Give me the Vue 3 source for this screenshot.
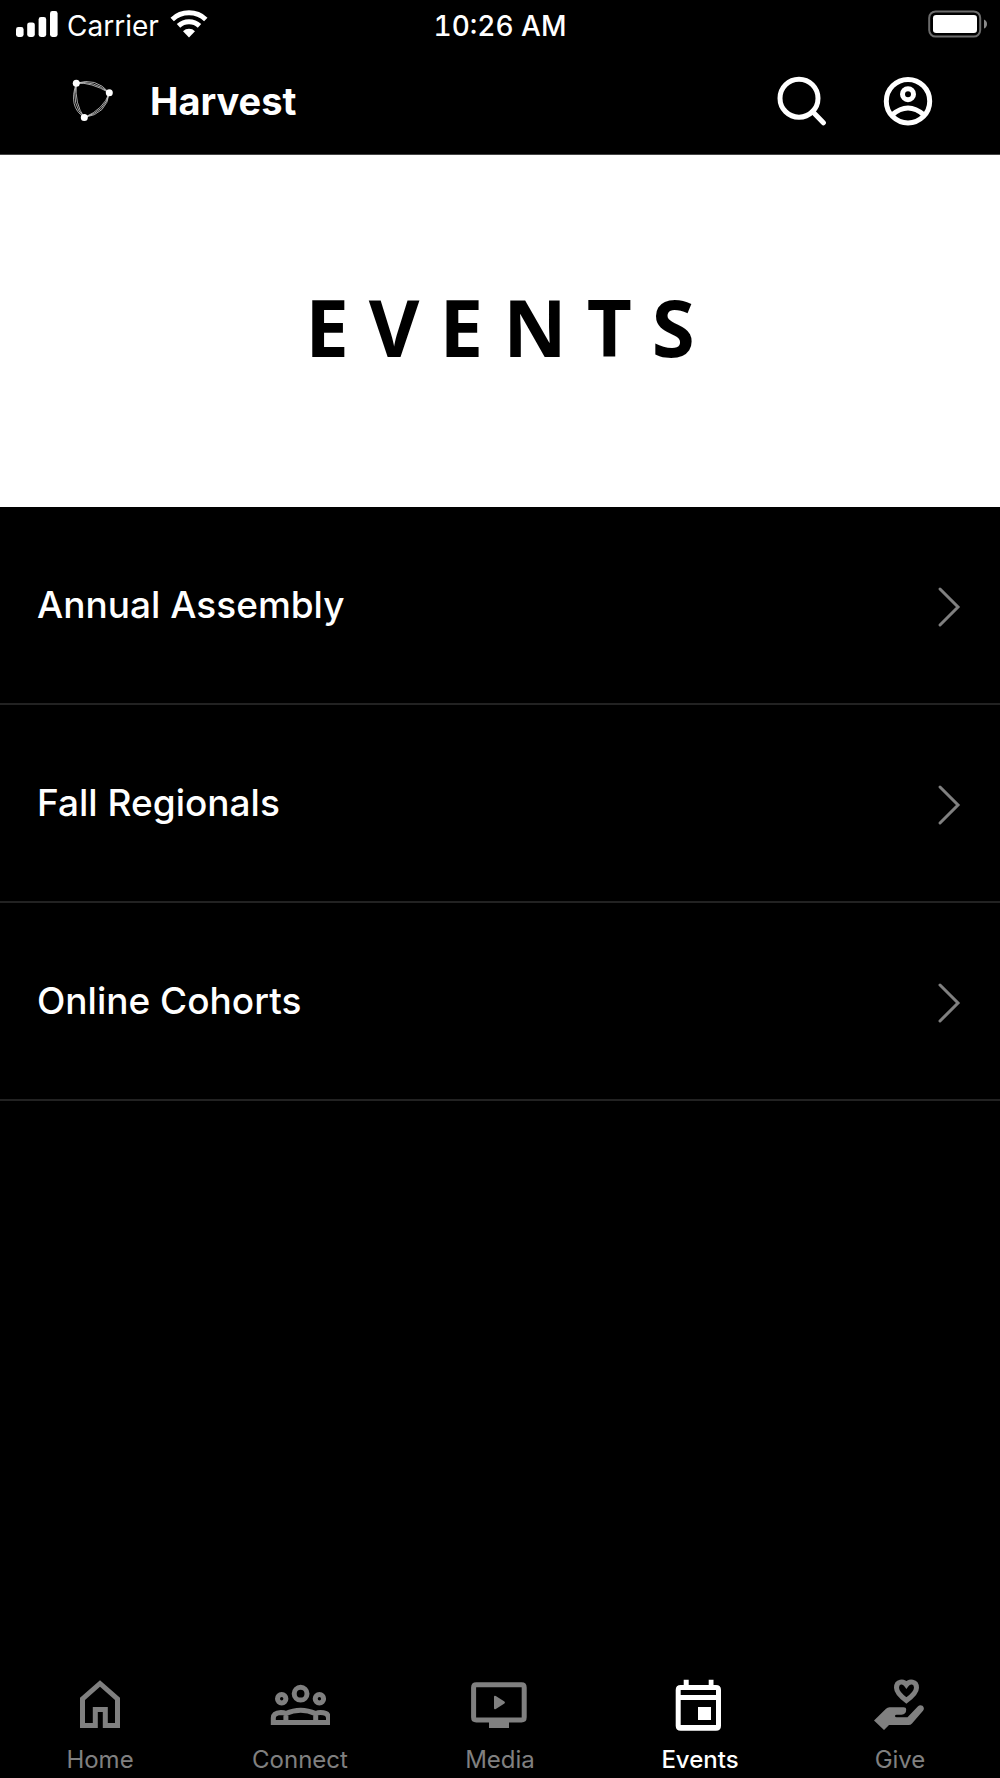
<template>
  <div class="app">
    <div class="status-bar">
      <div class="status-left">
        <svg class="signal" viewBox="0 0 42 28" aria-hidden="true">
          <rect x="0" y="17" width="7.6" height="10" rx="2.4" />
          <rect x="11.2" y="12.4" width="7.6" height="14.6" rx="2.4" />
          <rect x="22.6" y="7" width="7.6" height="20" rx="2.4" />
          <rect x="34" y="1" width="7.6" height="26" rx="2.4" />
        </svg>
        <span class="carrier">Carrier</span>
        <svg class="wifi" viewBox="0 0 38 28" aria-hidden="true">
          <path d="M2.2 9.5A24.6 24.6 0 0 1 35.8 9.5" />
          <path d="M8.5 15.9A15.4 15.4 0 0 1 29.5 15.9" />
          <path class="wifi-dot" d="M13 21.3a8.6 8.6 0 0 1 12 0L19 27.4z" />
        </svg>
      </div>
      <span class="time">10:26 AM</span>
      <svg class="battery" viewBox="0 0 60 28" aria-hidden="true">
        <rect class="battery-shell" x="1.2" y="1.4" width="51" height="25.2" rx="6.5" />
        <rect class="battery-level" x="5" y="5" width="44" height="18" rx="3.2" />
        <path class="battery-cap" d="M56 9.4c1.8.7 3 2.4 3 4.6s-1.2 3.9-3 4.6z" />
      </svg>
    </div>

    <header class="header">
      <svg class="logo" viewBox="0 0 50 50" aria-hidden="true">
        <g class="logo-lines">
          <path d="M8.3 7.2Q28 1 41.3 16.8" />
          <path d="M8.3 7.2Q26 4 41.3 16.8" />
          <path d="M8.3 7.2Q23 6 41.3 16.8" />
          <path d="M41.3 16.8Q39 38 16.3 41.5" />
          <path d="M41.3 16.8Q36 33 16.3 41.5" />
          <path d="M41.3 16.8Q38 35 16.3 41.5" />
          <path d="M8.3 7.2Q0 31 16.3 41.5" />
          <path d="M8.3 7.2Q3 29 16.3 41.5" />
          <path d="M8.3 7.2Q6.5 28 16.3 41.5" />
        </g>
        <circle cx="8.3" cy="7.2" r="3.5" />
        <circle cx="41.3" cy="16.8" r="3.5" />
        <circle cx="16.3" cy="41.5" r="3.5" />
      </svg>
      <span class="brand">Harvest</span>
      <div class="actions">
        <button type="button" class="icon-button" aria-label="Search">
          <svg viewBox="0 0 50 50">
            <circle cx="22" cy="22.2" r="19" />
            <path d="M35.5 35.5L46.4 46.8" />
          </svg>
        </button>
        <button type="button" class="icon-button" aria-label="Profile">
          <svg viewBox="0 0 50 50">
            <circle cx="25" cy="25.2" r="21.7" />
            <circle cx="25" cy="18.2" r="5.5" />
            <path d="M9 39Q25 25 41 39" />
          </svg>
        </button>
      </div>
    </header>

    <main>
      <div class="banner">
        <h1>EVENTS</h1>
      </div>
      <ul class="event-list">
        <li v-for="event in events" :key="event">
          <a href="#" class="event-row" @click.prevent>
            <span>{{ event }}</span>
            <svg class="chevron" viewBox="0 0 24 46" aria-hidden="true">
              <path d="M3 7L21 25L3 43" />
            </svg>
          </a>
        </li>
      </ul>
    </main>

    <nav class="tabs">
      <a
        v-for="tab in tabs"
        :key="tab.name"
        href="#"
        class="tab"
        :class="{ active: activeTab === tab.name }"
        @click.prevent="activeTab = tab.name"
      >
        <svg viewBox="0 0 60 60" aria-hidden="true">
          <path v-if="tab.line" class="line" :d="tab.line" />
          <path v-if="tab.fill" class="fill" fill-rule="evenodd" :d="tab.fill" />
        </svg>
        <span>{{ tab.name }}</span>
      </a>
    </nav>
  </div>
</template>

<script setup>
import { ref } from 'vue'

const events = ['Annual Assembly', 'Fall Regionals', 'Online Cohorts']

const activeTab = ref('Events')

// line = stroked outline, fill = solid shapes
const tabs = [
  {
    name: 'Home',
    line: 'M12.5 51.5V25L30 9.5L47.5 25V51.5H35.3V35.5H25.3V51.5Z',
  },
  {
    name: 'Connect',
    line:
      'M24.2 19.7a6.4 6.4 0 1 0 12.8 0a6.4 6.4 0 1 0 -12.8 0Z' +
      'M7.5 24.7a4.2 4.2 0 1 0 8.4 0a4.2 4.2 0 1 0 -8.4 0Z' +
      'M45.2 24.7a4.2 4.2 0 1 0 8.4 0a4.2 4.2 0 1 0 -8.4 0Z' +
      'M3.3 48.6H58.5V44Q58.5 38.6 50.5 38.6Q48 38.6 45.7 39.6Q38 36.2 30.7 36.2Q23 36.2 15.9 39.6Q13.8 38.6 11 38.6Q3.3 39.2 3.3 44Z' +
      'M15.9 39.6V48.6M45.7 39.6V48.6',
  },
  {
    name: 'Media',
    line: 'M6.3 10.8H51.5Q54.2 10.8 54.2 13.5V43.2Q54.2 45.9 51.5 45.9H6.3Q3.6 45.9 3.6 43.2V13.5Q3.6 10.8 6.3 10.8Z',
    fill: 'M19 46H39V54H19ZM24 23Q24 21.2 25.8 22L34.4 27.4Q35.6 28.5 34.4 29.6L25.8 35Q24 35.8 24 34Z',
  },
  {
    name: 'Events',
    fill:
      'M13.7 5.7H18.7V11H38.7V5.7H43.5V11H46Q51 11 51 16V51.7Q51 56.7 46 56.7H10.7Q5.7 56.7 5.7 51.7V16Q5.7 11 10.7 11H13.7Z' +
      'M10.7 16V21H46V16ZM10.7 26V51H46V26ZM28 33H41V46H28Z',
  },
  {
    name: 'Give',
    line: 'M36.4 26.5Q26.5 19 26.5 13.7C26.5 7 33.5 6.6 36.4 10.7C39.3 6.6 46.5 7 46.5 13.7Q46.5 19 36.4 26.5Z',
    fill:
      'M4 46.5L16 34.8Q17.5 33.3 19.5 33.3H33.5Q36.2 33.3 36.2 35.5Q36.2 40.5 31.5 40.7H26.5Q25 40.7 25 42Q25 43.3 26.5 43.3H37.5L47.8 32.5' +
      'Q50 30.3 52.5 31.8Q55 34.2 53 36.8L42 49.5Q40.6 51 38.5 51H19L14 56Z',
  },
]
</script>

<style>
body {
  margin: 0;
  background: #000;
}
</style>

<style scoped>
.app {
  display: flex;
  flex-direction: column;
  min-height: 100vh;
  background: #000;
  color: #fff;
  font-family: Inter, 'Liberation Sans', sans-serif;
}

/* status bar */
.status-bar {
  display: grid;
  grid-template-columns: 1fr auto 1fr;
  align-items: center;
  height: 48px;
  padding: 0 12px;
  font-size: 28px;
  line-height: 32px;
}
.status-left {
  display: flex;
  align-items: center;
  padding-left: 4px;
}
.signal {
  width: 42px;
  height: 28px;
  fill: #fff;
}
.carrier {
  margin: 4px 11px 0 9px;
}
.wifi {
  width: 38px;
  height: 28px;
  fill: none;
  stroke: #fff;
  stroke-width: 5;
}
.wifi-dot {
  fill: #fff;
  stroke: none;
}
.time {
  margin-top: 4px;
  font-weight: 500;
  font-variant-numeric: tabular-nums;
}
.battery {
  justify-self: end;
  width: 60px;
  height: 28px;
}
.battery-shell {
  fill: none;
  stroke: #6c6c6c;
  stroke-width: 2;
}
.battery-level {
  fill: #fff;
}
.battery-cap {
  fill: #8a8a8a;
}

/* header */
.header {
  display: flex;
  align-items: center;
  height: 106px;
  padding: 0 67px 0 68px;
  border-bottom: 1px solid #444;
}
.logo {
  width: 50px;
  height: 50px;
  fill: #fff;
}
.logo-lines {
  fill: none;
  stroke: #eee;
  stroke-width: 0.7;
}
.brand {
  margin-left: 32px;
  font-size: 38px;
  line-height: 48px;
  font-weight: 700;
}
.actions {
  display: flex;
  gap: 56px;
  margin-left: auto;
}
.icon-button {
  width: 50px;
  height: 50px;
  padding: 0;
  border: 0;
  background: none;
  cursor: pointer;
}
.icon-button svg {
  display: block;
  fill: none;
  stroke: #fff;
  stroke-width: 5;
  stroke-linecap: round;
}

/* banner */
.banner {
  display: flex;
  align-items: center;
  justify-content: center;
  box-sizing: border-box;
  height: 352px;
  padding-bottom: 8px;
  background: #fff;
  color: #000;
}
.banner h1 {
  margin: 0;
  padding-left: 20px;
  font-family: 'Open Sans', sans-serif;
  font-size: 78px;
  line-height: 96px;
  font-weight: 700;
  letter-spacing: 20px;
}

/* event list */
.event-list {
  margin: 0;
  padding: 0;
  list-style: none;
}
.event-row {
  display: flex;
  align-items: center;
  justify-content: space-between;
  height: 196px;
  padding: 0 39px 0 37px;
  border-bottom: 2px solid #222;
  color: #fff;
  font-size: 37px;
  line-height: 48px;
  font-weight: 500;
  text-decoration: none;
}
.chevron {
  width: 24px;
  height: 46px;
  fill: none;
  stroke: #808080;
  stroke-width: 3;
  stroke-linecap: round;
}

/* bottom tabs */
.tabs {
  display: grid;
  grid-template-columns: repeat(5, 1fr);
  margin-top: auto;
  padding-bottom: 6px;
}
.tab {
  display: flex;
  flex-direction: column;
  align-items: center;
  gap: 14px;
  color: #808080;
  font-size: 24px;
  line-height: 24px;
  text-decoration: none;
}
.tab.active {
  color: #fff;
  font-weight: 500;
}
.tab svg {
  width: 60px;
  height: 60px;
}
.line {
  fill: none;
  stroke: currentColor;
  stroke-width: 5;
}
.fill {
  fill: currentColor;
}
</style>
